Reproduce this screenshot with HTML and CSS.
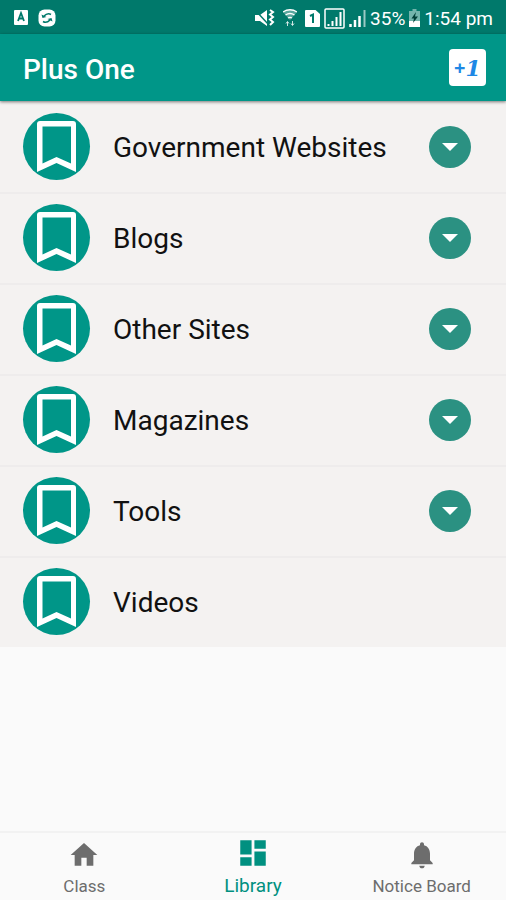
FILE: index.html
```html
<!DOCTYPE html>
<html lang="en">
<head>
  <meta charset="utf-8">
  <meta name="viewport" content="width=device-width, initial-scale=1.0">
  <title>Plus One</title>
  <link rel="stylesheet" href="styles.css">
</head>
<body>

<!-- Shared icons -->
<svg class="defs" width="0" height="0">
  <symbol id="bookmark" viewBox="0 0 67 67">
    <path d="M14 11a3 3 0 0 1 3-3h33a3 3 0 0 1 3 3v48L33.500 50 14 59zM19.500 13.500v37L33.500 44 48 50.500v-37z" fill="#fff" fill-rule="evenodd"/>
  </symbol>
  <symbol id="caret" viewBox="0 0 42 42">
    <path d="M13 17h16l-8 8z" fill="#fff"/>
  </symbol>
</svg>

<!-- Status bar -->
<div class="status">
  <svg width="14" height="16" viewBox="0 0 14 16">
    <rect width="14" height="15" rx="1" fill="#fff"/>
    <path d="M4 11l3-8 3 8M5 8.500h4" fill="none" stroke="#00796b" stroke-width="1.800"/>
  </svg>
  <svg width="18" height="18" viewBox="0 0 18 18">
    <rect x="0.500" y="0.500" width="17" height="17" rx="6" fill="#fff"/>
    <path d="M13 5.500C10.500 4 8 5 6 7M5 12.500c2.500 1.500 5 .5 7-1.500" fill="none" stroke="#00796b" stroke-width="1.600"/>
    <path d="M3.500 5.500l1 3.500 4-1zM14.500 12.500l-1-3.500-4 1z" fill="#00796b"/>
  </svg>
  <div class="status-right">
    <svg width="20" height="18" viewBox="0 0 20 18">
      <path d="M0 6h5l7-5v16l-7-5H0z" fill="#fff"/>
      <path d="M0 1l14 15" stroke="#00796b" stroke-width="1.500"/>
      <path d="M15 1l3 2-3 2.500 3 2.500-3 2.500 3 2.500-3 3" fill="none" stroke="#fff" stroke-width="2"/>
    </svg>
    <svg class="wifi" width="14" height="18" viewBox="0 0 14 18">
      <path d="M0 3c4-3 10-3 14 0l-7 8z" fill="#fff" opacity="0.350"/>
      <path d="M0 3c4-3 10-3 14 0M2.500 6c3-2 6-2 9 0M5 9c1.500-1 2.500-1 4 0" fill="none" stroke="#fff" stroke-width="1.300"/>
      <path d="M4.500 17v-4M3 14.500l1.500-2 1.500 2M9.500 12v4M8 14.500l1.500 2 1.500-2" fill="none" stroke="#fff" opacity="0.800"/>
    </svg>
    <svg width="15" height="17" viewBox="0 0 15 17">
      <path d="M1 0h9.500L15 4v12q0 1-1 1H1q-1 0-1-1V1q0-1 1-1z" fill="#fff"/>
      <path d="M5 6l3-1.500V13" fill="none" stroke="#00796b" stroke-width="2"/>
    </svg>
    <svg width="21" height="21" viewBox="0 0 21 21">
      <rect x="1" y="1" width="19" height="19" rx="1" fill="none" stroke="#fff" stroke-width="1.500"/>
      <path d="M4.500 18v-2M8.500 18v-5M12.500 18V9M16.500 18V4" stroke="#fff" stroke-width="2"/>
    </svg>
    <svg width="17" height="17" viewBox="0 0 17 17">
      <path d="M1.500 17v-3M6 17v-7M10.500 17V6" stroke="#fff" stroke-width="2.500"/>
      <path d="M15.500 17V0" stroke="#fff" stroke-width="2" opacity="0.600"/>
    </svg>
    <span class="percent">35%</span>
    <svg width="11" height="18" viewBox="0 0 11 18">
      <path d="M3.500 0h4v2H11v16H0V2h3.500z" fill="#fff" opacity="0.450"/>
      <path d="M0 12h11v6H0z" fill="#fff"/>
      <path d="M7 3L2.500 9.500H5L4 14l5-6.500H6z" fill="#003f38"/>
    </svg>
    <span class="time">1:54 pm</span>
  </div>
</div>

<!-- Header -->
<header class="appbar">
  <h1 class="title">Plus One</h1>
  <button class="badge" type="button"><span class="plus">+</span>1</button>
</header>

<!-- Library list -->
<main class="content">
  <ul class="list">
    <li class="row">
      <svg class="mark"><use href="#bookmark"/></svg>
      <span class="name">Government Websites</span>
      <button class="expand" type="button" aria-label="Expand Government Websites"><svg width="42" height="42"><use href="#caret"/></svg></button>
    </li>
    <li class="row">
      <svg class="mark"><use href="#bookmark"/></svg>
      <span class="name">Blogs</span>
      <button class="expand" type="button" aria-label="Expand Blogs"><svg width="42" height="42"><use href="#caret"/></svg></button>
    </li>
    <li class="row">
      <svg class="mark"><use href="#bookmark"/></svg>
      <span class="name">Other Sites</span>
      <button class="expand" type="button" aria-label="Expand Other Sites"><svg width="42" height="42"><use href="#caret"/></svg></button>
    </li>
    <li class="row">
      <svg class="mark"><use href="#bookmark"/></svg>
      <span class="name">Magazines</span>
      <button class="expand" type="button" aria-label="Expand Magazines"><svg width="42" height="42"><use href="#caret"/></svg></button>
    </li>
    <li class="row">
      <svg class="mark"><use href="#bookmark"/></svg>
      <span class="name">Tools</span>
      <button class="expand" type="button" aria-label="Expand Tools"><svg width="42" height="42"><use href="#caret"/></svg></button>
    </li>
    <li class="row">
      <svg class="mark"><use href="#bookmark"/></svg>
      <span class="name">Videos</span>
    </li>
  </ul>
</main>

<!-- Bottom navigation -->
<nav class="tabs">
  <a class="tab" href="#class">
    <svg width="32" height="32" viewBox="0 0 24 24"><path d="M10 20v-6h4v6h5v-8h3L12 3 2 12h3v8z" fill="currentColor"/></svg>
    <span>Class</span>
  </a>
  <a class="tab active" href="#library">
    <svg width="34" height="34" viewBox="0 0 24 24"><path d="M3 13h8V3H3v10zm0 8h8v-6H3v6zm10 0h8V11h-8v10zm0-18v6h8V3h-8z" fill="currentColor"/></svg>
    <span>Library</span>
  </a>
  <a class="tab" href="#notice">
    <svg width="32" height="32" viewBox="0 0 24 24"><path d="M12 22c1.100 0 2-.900 2-2h-4c0 1.100.890 2 2 2zm6-6v-5c0-3.070-1.640-5.640-4.500-6.320V4c0-.830-.670-1.500-1.500-1.500s-1.500.670-1.500 1.500v.680C7.630 5.360 6 7.920 6 11v5l-2 2v1h16v-1l-2-2z" fill="currentColor"/></svg>
    <span>Notice Board</span>
  </a>
</nav>

</body>
</html>
```
FILE: styles.css
```css
* {
  box-sizing: border-box;
}

body {
  display: flex;
  flex-direction: column;
  min-height: 100vh;
  margin: 0;
  font-family: Roboto, "Liberation Sans", sans-serif;
  background: #fafafa;
}

svg {
  display: block;
  flex: none;
}

.defs {
  position: absolute;
}

button {
  padding: 0;
  border: 0;
  cursor: pointer;
}

/* Status bar */
.status {
  display: flex;
  align-items: center;
  gap: 10px;
  height: 34px;
  padding: 2px 13px 0 14px;
  color: #fff;
  font-size: 19px;
  background: #00796b;
}

.status-right {
  display: flex;
  align-items: center;
  gap: 4px;
  margin-left: auto;
}

.wifi {
  margin: 0 4px;
}

.percent,
.time {
  white-space: nowrap;
}

/* Header */
.appbar {
  display: flex;
  align-items: center;
  justify-content: space-between;
  height: 67px;
  padding: 0 20px 0 23px;
  background: #009688;
  box-shadow: 0 1px 3px rgba(0, 0, 0, 0.5);
  z-index: 1;
}

.title {
  margin: 0;
  padding-top: 3px;
  color: #fff;
  font-size: 28px;
  font-weight: 500;
}

.badge {
  display: flex;
  align-items: center;
  justify-content: center;
  width: 37px;
  height: 37px;
  border-radius: 4px;
  color: #1e88e5;
  font-family: "DejaVu Serif", serif;
  font-size: 22px;
  font-style: italic;
  font-weight: bold;
  background: #fff;
}

.plus {
  font-family: "Noto Sans", sans-serif;
  font-size: 20px;
  font-style: normal;
}

/* List */
.content {
  flex: 1;
}

.list {
  margin: 0;
  padding: 0;
  list-style: none;
}

.row {
  display: flex;
  align-items: center;
  height: 91px;
  padding: 0 35px 2px 23px;
  background: #f4f2f1;
  border-top: 2px solid #eeecec;
}

.row:first-child {
  border-top-color: transparent;
}

.mark {
  width: 67px;
  height: 67px;
  border-radius: 50%;
  background: #009688;
}

.name {
  flex: 1;
  margin-left: 23px;
  padding-top: 2px;
  color: #111;
  font-size: 28px;
}

.expand {
  width: 42px;
  height: 42px;
  border-radius: 50%;
  background: #2b9182;
}

/* Bottom navigation */
.tabs {
  display: flex;
  height: 69px;
  border-top: 2px solid #f2f2f2;
}

.tab {
  display: flex;
  flex: 1;
  flex-direction: column;
  align-items: center;
  justify-content: space-between;
  padding: 6px 0 4px;
  color: #6d6d6d;
  font-size: 17px;
  line-height: 20px;
  text-decoration: none;
}

.active {
  padding-top: 3px;
  color: #009080;
  font-size: 19px;
}
```
